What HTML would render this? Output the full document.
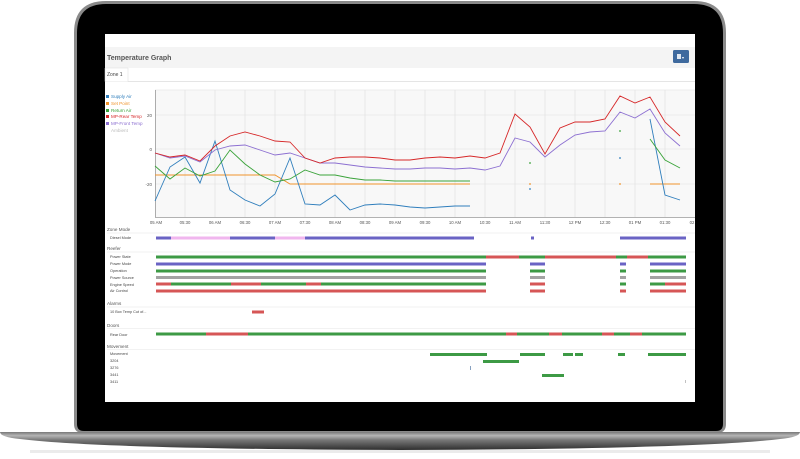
<!DOCTYPE html>
<html><head><meta charset="utf-8"><style>
html,body{margin:0;padding:0;background:#fff;width:800px;height:459px;overflow:hidden}
svg{display:block;font-family:"Liberation Sans",sans-serif}
</style></head><body>
<svg width="800" height="459" viewBox="0 0 800 459" xmlns="http://www.w3.org/2000/svg">
<defs>
<linearGradient id="base" x1="0" y1="0" x2="0" y2="1">
<stop offset="0" stop-color="#777"/><stop offset="0.2" stop-color="#b5b5b5"/><stop offset="0.45" stop-color="#777"/><stop offset="1" stop-color="#2e2e2e"/></linearGradient>
</defs>
<!-- lid -->
<path d="M106 1 H694 Q726 1 726 33 V424 Q726 433 717 433 H83 Q74 433 74 424 V33 Q74 1 106 1Z" fill="#8a8a8a"/>
<path d="M106 4 H694 Q723 4 723 33 V424 Q723 431 716 431 H84 Q77 431 77 424 V33 Q77 4 106 4Z" fill="#000"/>
<!-- base -->
<path d="M0 432 L800 432 Q800 437 780 439 Q700 449 400 450 Q100 449 20 439 Q0 437 0 432Z" fill="url(#base)"/>
<rect x="30" y="450" width="740" height="3" fill="#e2e2e2" opacity="0.7"/>
<!-- screen -->
<rect x="105" y="34" width="590" height="368" fill="#fff"/>
<rect x="105" y="47" width="590" height="21" fill="#f4f4f4"/>
<text x="107" y="60" font-size="7" font-weight="bold" fill="#555">Temperature Graph</text>
<rect x="673" y="50" width="16" height="13" rx="1.5" fill="#3f6a9e"/>
<rect x="677" y="54" width="4" height="5" fill="#dfe7f1"/><text x="682" y="59" font-size="4" fill="#fff">▾</text>
<line x1="105" y1="81.5" x2="695" y2="81.5" stroke="#ddd" stroke-width="0.7"/>
<path d="M105 81.5 V68 H128 V81.5" fill="#fff" stroke="#ddd" stroke-width="0.5"/>
<text x="107" y="76" font-size="5" fill="#444">Zone 1</text>
<!-- plot -->
<rect x="155" y="90" width="540" height="127" fill="#f8f8f8"/>
<g stroke="#dedede" stroke-width="0.6">
<line x1="185" y1="90" x2="185" y2="217"/><line x1="215" y1="90" x2="215" y2="217"/><line x1="245" y1="90" x2="245" y2="217"/><line x1="275" y1="90" x2="275" y2="217"/><line x1="305" y1="90" x2="305" y2="217"/><line x1="335" y1="90" x2="335" y2="217"/><line x1="365" y1="90" x2="365" y2="217"/><line x1="395" y1="90" x2="395" y2="217"/><line x1="425" y1="90" x2="425" y2="217"/><line x1="455" y1="90" x2="455" y2="217"/><line x1="485" y1="90" x2="485" y2="217"/><line x1="515" y1="90" x2="515" y2="217"/><line x1="545" y1="90" x2="545" y2="217"/><line x1="575" y1="90" x2="575" y2="217"/><line x1="605" y1="90" x2="605" y2="217"/><line x1="635" y1="90" x2="635" y2="217"/><line x1="665" y1="90" x2="665" y2="217"/>
<line x1="155" y1="90" x2="695" y2="90"/><line x1="155" y1="115" x2="695" y2="115"/><line x1="155" y1="149" x2="695" y2="149"/><line x1="155" y1="184" x2="695" y2="184"/>
</g>
<path d="M155.5 90 V217.5 H695" fill="none" stroke="#999" stroke-width="0.8"/>
<g font-size="4.5" fill="#555" text-anchor="end"><text x="152" y="117">20</text><text x="152" y="151">0</text><text x="152" y="186">-20</text></g>
<g font-size="4.3" fill="#555" text-anchor="middle">
<text x="156" y="224">05 AM</text><text x="185" y="224">05:30</text><text x="215" y="224">06 AM</text><text x="245" y="224">06:30</text><text x="275" y="224">07 AM</text><text x="305" y="224">07:30</text><text x="335" y="224">08 AM</text><text x="365" y="224">08:30</text><text x="395" y="224">09 AM</text><text x="425" y="224">09:30</text><text x="455" y="224">10 AM</text><text x="485" y="224">10:30</text><text x="515" y="224">11 AM</text><text x="545" y="224">11:30</text><text x="575" y="224">12 PM</text><text x="605" y="224">12:30</text><text x="635" y="224">01 PM</text><text x="665" y="224">01:30</text><text x="692" y="224">02</text></g>
<!-- legend -->
<g font-size="4.6">
<rect x="106" y="95" width="3" height="3" fill="#2f7ebc"/><text x="111" y="98" fill="#2f7ebc">Supply Air</text>
<rect x="106" y="102" width="3" height="3" fill="#f0932b"/><text x="111" y="105" fill="#f0932b">Set Point</text>
<rect x="106" y="109" width="3" height="3" fill="#3aa33a"/><text x="111" y="112" fill="#3aa33a">Return Air</text>
<rect x="106" y="115" width="3" height="3" fill="#d62728"/><text x="111" y="118" fill="#d62728">MP-Rear Temp</text>
<rect x="106" y="122" width="3" height="3" fill="#8c6fd1"/><text x="111" y="125" fill="#8c6fd1">MP-Front Temp</text>
<text x="111" y="132" fill="#bbb">Ambient</text></g>
<!-- series -->
<g fill="none" stroke-width="0.9">
<polyline stroke="#f0932b" points="155,175 275,175 290,184 470,184"/>
<polyline stroke="#f0932b" points="650,184 680,184"/>
<polyline stroke="#2f7ebc" points="155,201 170,167 185,157 200,183 215,141 230,190 245,200 260,206 275,194 290,158 305,204 320,205 335,195 350,210 365,205 380,204 395,205 410,207 425,208 440,207 455,206 470,206"/>
<polyline stroke="#2f7ebc" points="650,119 665,195 680,200"/>
<polyline stroke="#3aa33a" points="155,166 170,179 185,168 200,176 215,171 230,150 245,164 260,175 275,182 290,179 305,170 320,175 335,175 350,178 365,180 380,180 395,181 470,181"/>
<polyline stroke="#3aa33a" points="650,139 665,160 680,168"/>
<polyline stroke="#8c6fd1" points="155,153 170,158 185,156 200,162 215,150 230,146 245,145 260,150 275,155 290,153 305,158 320,163 335,163 350,165 365,167 380,168 395,169 410,169 425,168 440,168 455,169 470,168 485,170 500,166 515,138 530,142 545,157 560,145 575,135 590,132 605,131 620,112 635,118 650,109 665,133 680,146"/>
<polyline stroke="#d62728" points="155,153 170,157 185,155 200,161 215,146 230,136 245,132 260,136 275,141 290,142 305,158 320,163 335,158 350,157 365,157 380,158 395,160 410,160 425,158 440,157 455,158 470,156 485,158 500,153 515,114 530,127 545,154 560,128 575,122 590,122 605,119 620,96 635,103 650,97 665,122 680,136"/>
</g>
<g><circle cx="530" cy="163" r="0.9" fill="#3aa33a"/><circle cx="620" cy="131" r="0.9" fill="#3aa33a"/><circle cx="530" cy="184" r="0.9" fill="#f0932b"/><circle cx="620" cy="184" r="0.9" fill="#f0932b"/><circle cx="530" cy="189" r="0.9" fill="#2f7ebc"/><circle cx="620" cy="158" r="0.9" fill="#2f7ebc"/></g>
<!-- sections -->
<g font-size="4.6" fill="#555">
<text x="107" y="231">Zone Mode</text><text x="107" y="250">Reefer</text><text x="107" y="305">Alarms</text><text x="107" y="327">Doors</text><text x="107" y="348">Movement</text></g>
<g stroke="#e6e6e6" stroke-width="0.6"><line x1="107" y1="233" x2="695" y2="233"/><line x1="107" y1="252" x2="695" y2="252"/><line x1="107" y1="307" x2="695" y2="307"/><line x1="107" y1="328.5" x2="695" y2="328.5"/><line x1="107" y1="349.5" x2="695" y2="349.5"/></g>
<g font-size="3.8" fill="#444">
<text x="110" y="239">Diesel Mode</text><text x="110" y="258">Power State</text><text x="110" y="265">Power Mode</text><text x="110" y="272">Operation</text><text x="110" y="279">Power Source</text><text x="110" y="286">Engine Speed</text><text x="110" y="292">Air Control</text>
<text x="110" y="313">10 Box Temp Cut of...</text><text x="110" y="336">Rear Door</text>
<text x="110" y="355">Movement</text><text x="110" y="362">3204</text><text x="110" y="369">3276</text><text x="110" y="376">3441</text><text x="110" y="383">3411</text></g>
<g>
<rect x="156" y="236.5" width="15" height="3" fill="#6a63c4"/><rect x="171" y="236.5" width="59" height="3" fill="#f0b6ee"/><rect x="230" y="236.5" width="45" height="3" fill="#6a63c4"/><rect x="275" y="236.5" width="30" height="3" fill="#f0b6ee"/><rect x="305" y="236.5" width="169" height="3" fill="#6a63c4"/><rect x="531" y="236.5" width="3" height="3" fill="#6a63c4"/><rect x="620" y="236.5" width="66" height="3" fill="#6a63c4"/>
<rect x="156" y="255.5" width="330" height="3" fill="#3d9a45"/><rect x="486" y="255.5" width="33" height="3" fill="#d65656"/><rect x="519" y="255.5" width="26" height="3" fill="#3d9a45"/><rect x="545" y="255.5" width="71" height="3" fill="#d65656"/><rect x="616" y="255.5" width="11" height="3" fill="#3d9a45"/><rect x="627" y="255.5" width="21" height="3" fill="#d65656"/><rect x="648" y="255.5" width="38" height="3" fill="#3d9a45"/>
<g fill="#6a63c4"><rect x="156" y="262.5" width="330" height="3"/><rect x="530" y="262.5" width="15" height="3"/><rect x="620" y="262.5" width="6" height="3"/><rect x="650" y="262.5" width="36" height="3"/></g>
<g fill="#3d9a45"><rect x="156" y="269.5" width="330" height="3"/><rect x="530" y="269.5" width="15" height="3"/><rect x="620" y="269.5" width="6" height="3"/><rect x="650" y="269.5" width="36" height="3"/></g>
<g fill="#a3a3a3"><rect x="156" y="276" width="330" height="3"/><rect x="530" y="276" width="15" height="3"/><rect x="620" y="276" width="6" height="3"/><rect x="650" y="276" width="36" height="3"/></g>
<rect x="156" y="282.5" width="330" height="3" fill="#3d9a45"/><rect x="156" y="282.5" width="15" height="3" fill="#d65656"/><rect x="231" y="282.5" width="30" height="3" fill="#d65656"/><rect x="306" y="282.5" width="15" height="3" fill="#d65656"/><rect x="530" y="282.5" width="15" height="3" fill="#d65656"/><rect x="620" y="282.5" width="6" height="3" fill="#3d9a45"/><rect x="650" y="282.5" width="15" height="3" fill="#3d9a45"/><rect x="665" y="282.5" width="21" height="3" fill="#d65656"/>
<g fill="#d65656"><rect x="156" y="289.5" width="330" height="3"/><rect x="530" y="289.5" width="15" height="3"/><rect x="620" y="289.5" width="6" height="3"/><rect x="650" y="289.5" width="36" height="3"/></g>
<rect x="252" y="310.5" width="12" height="3" fill="#d65656"/>
<rect x="156" y="332.5" width="530" height="3" fill="#3d9a45"/>
<g fill="#d65656"><rect x="206" y="332.5" width="42" height="3"/><rect x="506" y="332.5" width="11" height="3"/><rect x="549" y="332.5" width="13" height="3"/><rect x="602" y="332.5" width="12" height="3"/><rect x="630" y="332.5" width="12" height="3"/></g>
<g fill="#3d9a45"><rect x="430" y="353" width="57" height="3"/><rect x="520" y="353" width="25" height="3"/><rect x="563" y="353" width="10" height="3"/><rect x="575" y="353" width="8" height="3"/><rect x="618" y="353" width="7" height="3"/><rect x="648" y="353" width="38" height="3"/><rect x="483" y="360" width="36" height="3"/><rect x="542" y="374" width="22" height="3"/></g>
<rect x="470" y="366" width="0.8" height="4" fill="#6a8ab0"/><rect x="685" y="380" width="0.6" height="3" fill="#999"/>
</g>
</svg>
</body></html>
